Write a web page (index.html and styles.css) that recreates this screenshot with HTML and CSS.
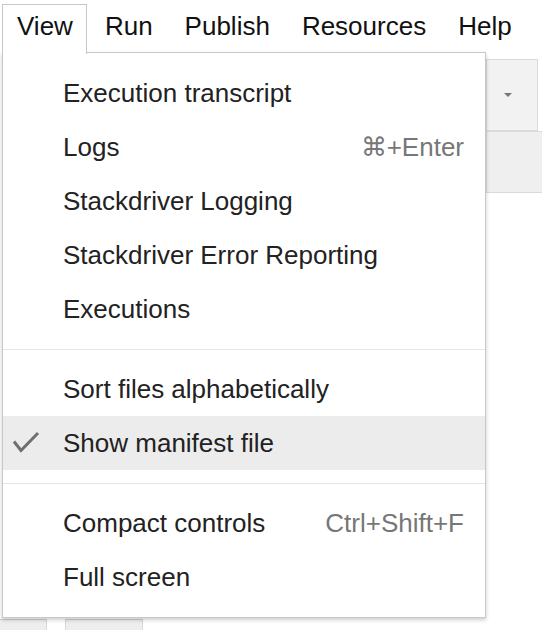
FILE: index.html
```html
<!DOCTYPE html>
<html>
<head>
<meta charset="utf-8">
<link rel="stylesheet" href="styles.css">
</head>
<body>
<div class="screen">
  <nav class="menubar">
    <div class="mb-item active">View</div>
    <div class="mb-item">Run</div>
    <div class="mb-item">Publish</div>
    <div class="mb-item">Resources</div>
    <div class="mb-item">Help</div>
  </nav>
  <div class="workspace">
    <div class="side">
      <div class="tb-btn"><span class="arrow"></span></div>
      <div class="panel"></div>
    </div>
    <div class="bottom-tabs">
      <div class="btab first"></div>
      <div class="btab second"></div>
    </div>
  </div>
  <div class="dropdown">
    <div class="group">
      <div class="item"><span class="check"></span><span class="label">Execution transcript</span><span class="kbd"></span></div>
      <div class="item"><span class="check"></span><span class="label">Logs</span><span class="kbd">⌘+Enter</span></div>
      <div class="item"><span class="check"></span><span class="label">Stackdriver Logging</span><span class="kbd"></span></div>
      <div class="item"><span class="check"></span><span class="label">Stackdriver Error Reporting</span><span class="kbd"></span></div>
      <div class="item"><span class="check"></span><span class="label">Executions</span><span class="kbd"></span></div>
    </div>
    <div class="sep"></div>
    <div class="group">
      <div class="item"><span class="check"></span><span class="label">Sort files alphabetically</span><span class="kbd"></span></div>
      <div class="item hover"><span class="check"><svg width="28" height="24" viewBox="0 0 28 24"><path d="M2 10.5 L9 19.5 L26 2" fill="none" stroke="#6f6f6f" stroke-width="3" stroke-linejoin="miter"/></svg></span><span class="label">Show manifest file</span><span class="kbd"></span></div>
    </div>
    <div class="sep"></div>
    <div class="group">
      <div class="item"><span class="check"></span><span class="label">Compact controls</span><span class="kbd">Ctrl+Shift+F</span></div>
      <div class="item"><span class="check"></span><span class="label">Full screen</span><span class="kbd"></span></div>
    </div>
  </div>
</div>
</body>
</html>
```
FILE: styles.css
```css
html, body {
  margin: 0;
  padding: 0;
  background: #fff;
}
.screen {
  position: relative;
  width: 542px;
  height: 630px;
  overflow: hidden;
  font-family: "Liberation Sans", Arial, sans-serif;
  display: flex;
  flex-direction: column;
}
.menubar {
  display: flex;
  padding: 4px 0 0 2px;
  height: 48px;
  position: relative;
  z-index: 3;
}
.mb-item {
  font-size: 26px;
  line-height: 30px;
  color: #111;
  padding: 7px 16px 12px;
  height: 30px;
}
.mb-item.active {
  padding: 6px 13px 13px 14px;
  border: 1px solid #c8c8c8;
  border-bottom: 0;
  background: #fff;
  margin-right: 2px;
}
.workspace {
  flex: 1;
  display: flex;
  flex-direction: column;
}
.side {
  margin-left: 486px;
  margin-top: 7px;
  display: flex;
  flex-direction: column;
}
.tb-btn {
  width: 50px;
  height: 70px;
  background: #f2f2f2;
  border: 1px solid #dadada;
  display: flex;
  align-items: center;
  justify-content: center;
}
.arrow {
  width: 0;
  height: 0;
  border-left: 4px solid transparent;
  border-right: 4px solid transparent;
  border-top: 4px solid #777;
  margin-left: -8px;
}
.panel {
  height: 60px;
  background: #efefef;
  border: 1px solid #dadada;
  border-right: 0;
}
.bottom-tabs {
  margin-top: auto;
  display: flex;
  gap: 18px;
  height: 11px;
}
.btab {
  background: #eeeeee;
  border-top: 1px solid #cfcfcf;
  border-right: 1px solid #d8d8d8;
}
.btab.first { width: 46px; }
.btab.second { width: 76px; border-left: 1px solid #d8d8d8; }

.dropdown {
  position: absolute;
  left: 2px;
  top: 52px;
  width: 482px;
  background: #fff;
  border: 1px solid #c8c8c8;
  box-shadow: 0 2px 4px rgba(0,0,0,0.2);
  padding: 13px 0;
  z-index: 2;
}
.item {
  display: grid;
  grid-template-columns: 60px 1fr auto;
  align-items: center;
  height: 54px;
  padding-right: 21px;
  font-size: 26px;
  line-height: 30px;
  color: #222;
}
.item.hover {
  background: #ececec;
}
.check {
  display: flex;
  align-items: center;
  padding-left: 9px;
  height: 24px;
}
.check svg { display: block; }
.kbd {
  color: #777;
}
.sep {
  border-top: 1px solid #e6e6e6;
  margin: 13px 0 12px;
}
```
